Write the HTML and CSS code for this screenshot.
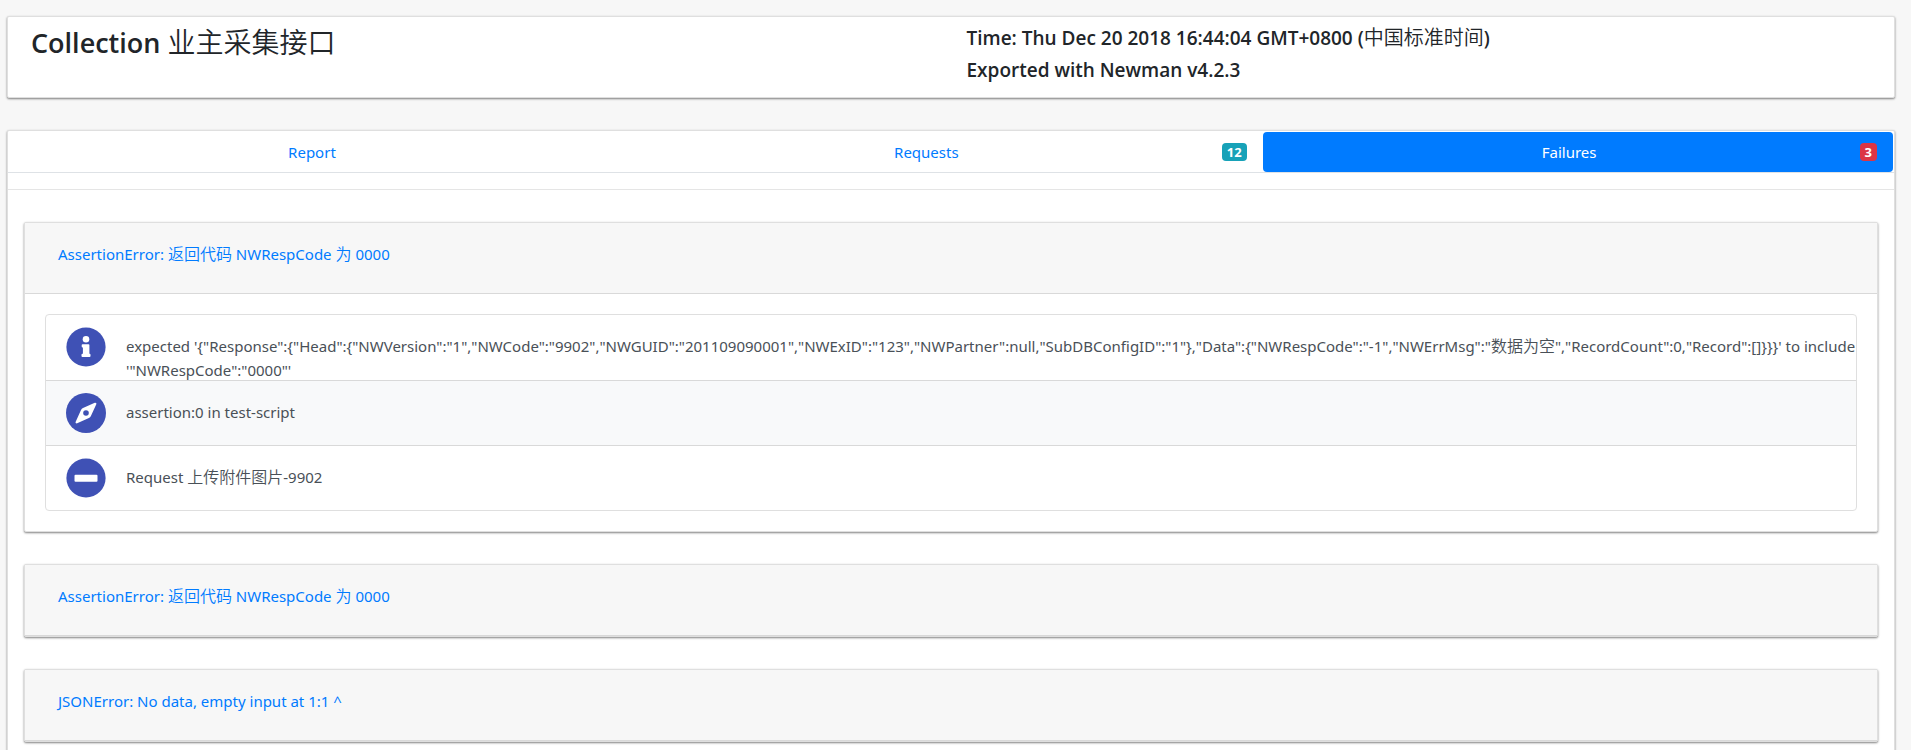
FILE: index.html
```
<!DOCTYPE html>
<html lang="zh-CN">
<head>
<meta charset="utf-8">
<title>Newman Report</title>
<link rel="stylesheet" href="styles.css">
</head>
<body>
<header class="card summary">
  <h1 class="title">Collection <span class="cjk">业主采集接口</span></h1>
  <div class="meta">
    <p class="meta-line">Time: Thu Dec 20 2018 16:44:04 GMT+0800 (<span class="cjk">中国标准时间</span>)</p>
    <p class="meta-line">Exported with Newman v4.2.3</p>
  </div>
</header>
<main class="card report">
  <nav class="tabs">
    <a class="tab" href="#report">Report</a>
    <a class="tab" href="#requests"><span class="tab-label">Requests</span><span class="badge badge-info">12</span></a>
    <a class="tab active" href="#failures" aria-current="page"><span class="tab-label">Failures</span><span class="badge badge-danger">3</span></a>
  </nav>
  <section class="failures" id="failures">
    <article class="card failure">
      <h2 class="failure-head"><a href="#failure-1">AssertionError: <span class="cjk">返回代码</span> NWRespCode <span class="cjk">为</span> 0000</a></h2>
      <div class="failure-body" id="failure-1">
        <ul class="details">
          <li class="detail">
            <svg class="icon" viewBox="0 0 40 40" aria-hidden="true"><circle cx="20" cy="20" r="19.6" fill="#3f51b5"/><circle cx="20" cy="12.3" r="3.3" fill="#fff"/><path fill="#fff" d="M16.6 17.2h5.900a.9.9 0 0 1 .9.9v8.700h.2a.9.9 0 0 1 .9.9v1.400a.9.9 0 0 1-.9.9h-7.200a.9.9 0 0 1-.9-.9v-1.400a.9.9 0 0 1 .9-.9h.5v-6.400h-.3a.9.9 0 0 1-.9-.9v-1.400a.9.9 0 0 1 .9-.9z"/></svg>
            <p class="detail-text">expected '{"Response":{"Head":{"NWVersion":"1","NWCode":"9902","NWGUID":"201109090001","NWExID":"123","NWPartner":null,"SubDBConfigID":"1"},"Data":{"NWRespCode":"-1","NWErrMsg":"<span class="cjk">数据为空</span>","RecordCount":0,"Record":[]}}}' to include '"NWRespCode":"0000"'</p>
          </li>
          <li class="detail striped">
            <svg class="icon" viewBox="0 0 40 40" aria-hidden="true"><circle cx="20" cy="20" r="20" fill="#3f51b5"/><path fill="#fff" d="M28.8 9.8c1.1-.5 2 .4 1.500 1.500l-5.400 11.700a4.400 4.400 0 0 1-2 2l-11.700 5.300c-1.100.5-2-.4-1.500-1.500L15 17.100a4.400 4.400 0 0 1 2-2z"/><circle cx="20" cy="20" r="2.800" fill="#3f51b5"/></svg>
            <p class="detail-text">assertion:0 in test-script</p>
          </li>
          <li class="detail">
            <svg class="icon" viewBox="0 0 40 40" aria-hidden="true"><circle cx="20" cy="20" r="19.600" fill="#3f51b5"/><rect x="8.500" y="16.700" width="23" height="7" rx="1" fill="#fff"/></svg>
            <p class="detail-text">Request <span class="cjk">上传附件图片</span>-9902</p>
          </li>
        </ul>
      </div>
    </article>
    <article class="card failure">
      <h2 class="failure-head"><a href="#failure-2">AssertionError: <span class="cjk">返回代码</span> NWRespCode <span class="cjk">为</span> 0000</a></h2>
    </article>
    <article class="card failure">
      <h2 class="failure-head"><a href="#failure-3">JSONError: No data, empty input at 1:1 ^</a></h2>
    </article>
  </section>
</main>
</body>
</html>
```
FILE: styles.css
```
* {
  box-sizing: border-box;
}

body {
  margin: 0;
  padding: 16px 16px 0 7px;
  background: #f7f7f7;
  color: #212529;
  font: 15px/24px "Noto Sans", "Open Sans", "Noto Sans CJK SC", sans-serif;
  height: 100vh;
  overflow: hidden;
}

h1,
h2,
p,
ul {
  margin: 0;
  padding: 0;
}

a {
  color: #007bff;
  text-decoration: none;
}

.cjk {
  font-family: "Noto Sans CJK SC", sans-serif;
  font-size: 16px;
  font-weight: 350;
  line-height: 1;
}

.card {
  background: #fff;
  border: 1px solid #dfdfdf;
  border-radius: 2px;
  box-shadow: 0 1px 3px rgba(0, 0, 0, 0.12), 0 1px 2px rgba(0, 0, 0, 0.4);
}

.summary {
  display: grid;
  grid-template-columns: 1fr 1fr;
  padding: 9px 0 7px 23px;
  margin-bottom: 32px;
}

.title,
.meta-line {
  font-family: "Open Sans", "Noto Sans CJK SC", sans-serif;
  font-weight: 600;
}

.title {
  font-size: 27px;
  line-height: 34px;
}

.title .cjk {
  font-size: 28px;
}

.meta {
  padding-left: 4px;
}

.meta-line {
  font-size: 19px;
  line-height: 24px;
  margin-bottom: 8px;
}

.meta-line .cjk {
  font-size: 20px;
}

.tabs {
  display: flex;
  padding: 1px 1px 0;
  border-bottom: 1px solid #dee2e6;
}

.tab {
  display: flex;
  align-items: center;
  justify-content: center;
  flex: 1 1 auto;
  padding: 8px 16px;
  border-radius: 4px;
}

.tab-label {
  flex: 1 1 auto;
  text-align: center;
}

.active {
  background: #007bff;
  color: #fff;
}

.badge {
  padding: 3px 5px;
  border-radius: 4px;
  color: #fff;
  font-size: 13px;
  line-height: 12px;
  font-weight: 700;
}

.badge-info {
  background: #17a2b8;
}

.badge-danger {
  background: #dc3545;
}

.failures {
  margin-top: 16px;
  padding: 32px 16px;
  border-top: 1px solid #e5e5e5;
}

.failure {
  margin-bottom: 32px;
}

.failure-head {
  padding: 19px 33px 27px;
  background: #f7f7f7;
  border-bottom: 1px solid #d9d9d9;
  font-size: 15px;
  line-height: 24px;
  font-weight: 400;
}

.failure-body {
  padding: 20px;
}

.details {
  list-style: none;
  border: 1px solid #dfdfdf;
  border-radius: 4px;
}

.detail {
  display: flex;
  align-items: flex-start;
  height: 65px;
  padding: 12px 0 0 20px;
  overflow: hidden;
}

.detail + .detail {
  border-top: 1px solid #d9d9d9;
}

.striped {
  background: #f8f9fa;
}

.icon {
  flex: none;
  width: 40px;
  height: 40px;
}

.detail-text {
  margin: 7px 0 0 20px;
  color: #495057;
}
```
